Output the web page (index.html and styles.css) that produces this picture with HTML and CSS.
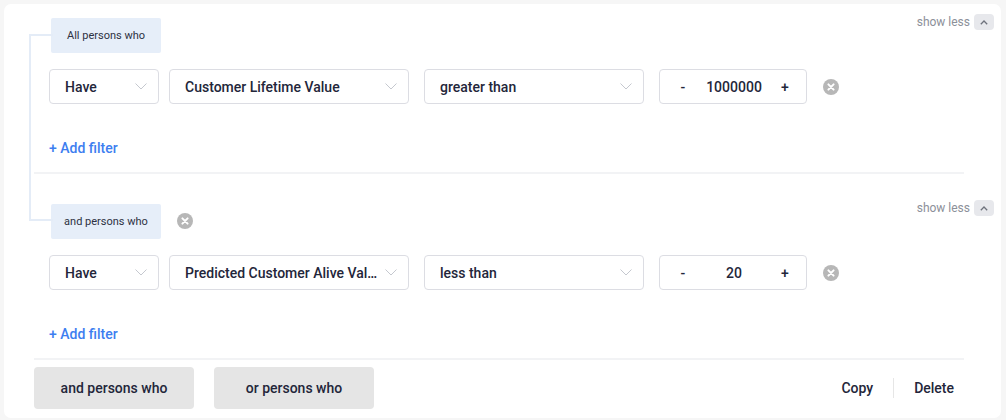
FILE: index.html
```html
<!DOCTYPE html>
<html lang="en">
<head>
  <meta charset="UTF-8" />
  <meta name="viewport" content="width=device-width, initial-scale=1" />
  <title>Segment builder</title>
  <link rel="stylesheet" href="styles.css">
</head>
<body>
  <div class="card">
    <div class="tree"></div>

    <div class="group first">
      <div class="group-head">
        <div class="label">All persons who</div>
        <div class="show-less">show less <span class="caret"><svg width="8" height="5" viewBox="0 0 8 5"><polyline points="0.8,4.2 4,1 7.2,4.2" fill="none" stroke="#6e727c" stroke-width="1.3"/></svg></span></div>
      </div>
      <div class="filter-row">
        <div class="select w-have"><span class="value">Have</span><svg class="chev" width="12" height="7" viewBox="0 0 12 7"><polyline points="0.5,0.5 6,6 11.5,0.5" fill="none" stroke="#c5c8cf" stroke-width="1"/></svg></div>
        <div class="select w-field"><span class="value">Customer Lifetime Value</span><svg class="chev" width="12" height="7" viewBox="0 0 12 7"><polyline points="0.5,0.5 6,6 11.5,0.5" fill="none" stroke="#c5c8cf" stroke-width="1"/></svg></div>
        <div class="select w-op"><span class="value">greater than</span><svg class="chev" width="12" height="7" viewBox="0 0 12 7"><polyline points="0.5,0.5 6,6 11.5,0.5" fill="none" stroke="#c5c8cf" stroke-width="1"/></svg></div>
        <div class="number"><span class="step">-</span><span class="num">1000000</span><span class="step">+</span></div>
        <span class="remove"><svg width="16" height="16" viewBox="0 0 16 16"><circle cx="8" cy="8" r="8" fill="#b7b7b7"/><path d="M5.4 5.4 L10.6 10.6 M10.6 5.4 L5.4 10.6" stroke="#fff" stroke-width="2" stroke-linecap="round"/></svg></span>
      </div>
      <a class="add-filter" href="#">+ Add filter</a>
    </div>

    <div class="divider"></div>

    <div class="group">
      <div class="group-head">
        <div class="label">and persons who</div>
        <span class="remove head-remove"><svg width="16" height="16" viewBox="0 0 16 16"><circle cx="8" cy="8" r="8" fill="#b7b7b7"/><path d="M5.4 5.4 L10.6 10.6 M10.6 5.4 L5.4 10.6" stroke="#fff" stroke-width="2" stroke-linecap="round"/></svg></span>
        <div class="show-less">show less <span class="caret"><svg width="8" height="5" viewBox="0 0 8 5"><polyline points="0.8,4.2 4,1 7.2,4.2" fill="none" stroke="#6e727c" stroke-width="1.3"/></svg></span></div>
      </div>
      <div class="filter-row">
        <div class="select w-have"><span class="value">Have</span><svg class="chev" width="12" height="7" viewBox="0 0 12 7"><polyline points="0.5,0.5 6,6 11.5,0.5" fill="none" stroke="#c5c8cf" stroke-width="1"/></svg></div>
        <div class="select w-field"><span class="value">Predicted Customer Alive Value</span><svg class="chev" width="12" height="7" viewBox="0 0 12 7"><polyline points="0.5,0.5 6,6 11.5,0.5" fill="none" stroke="#c5c8cf" stroke-width="1"/></svg></div>
        <div class="select w-op"><span class="value">less than</span><svg class="chev" width="12" height="7" viewBox="0 0 12 7"><polyline points="0.5,0.5 6,6 11.5,0.5" fill="none" stroke="#c5c8cf" stroke-width="1"/></svg></div>
        <div class="number"><span class="step">-</span><span class="num">20</span><span class="step">+</span></div>
        <span class="remove"><svg width="16" height="16" viewBox="0 0 16 16"><circle cx="8" cy="8" r="8" fill="#b7b7b7"/><path d="M5.4 5.4 L10.6 10.6 M10.6 5.4 L5.4 10.6" stroke="#fff" stroke-width="2" stroke-linecap="round"/></svg></span>
      </div>
      <a class="add-filter" href="#">+ Add filter</a>
    </div>

    <div class="divider"></div>

    <div class="footer">
      <button class="group-btn">and persons who</button>
      <button class="group-btn">or persons who</button>
      <div class="actions">
        <button class="link-btn">Copy</button>
        <span class="sep"></span>
        <button class="link-btn">Delete</button>
      </div>
    </div>
  </div>
</body>
</html>
```

FILE: styles.css
```css
body {
  margin: 0;
  background: #f6f6f6;
  font-family: Roboto, "Noto Sans", Arial, sans-serif;
  color: #23263a;
}
.card {
  position: relative;
  margin: 4px 5px 2px 4px;
  height: 414px;
  box-sizing: border-box;
  background: #fff;
  border-radius: 7px;
  padding: 0 7px 9px 0;
}
.tree {
  position: absolute;
  left: 25px;
  top: 30px;
  width: 22px;
  height: 183px;
  border: 2px solid #e4ecf7;
  border-right: none;
}
.group {
  padding-top: 30px;
}
.group.first {
  padding-top: 14px;
}
.group-head {
  display: flex;
  align-items: flex-start;
  padding-left: 47px;
}
.label {
  width: 110px;
  height: 35px;
  display: flex;
  align-items: center;
  justify-content: center;
  background: #e6eef9;
  border-radius: 2px;
  font-size: 11px;
  color: #2d3142;
}
.head-remove {
  margin: 9px 0 0 14px;
}
.show-less {
  margin-left: auto;
  margin-top: -4px;
  display: flex;
  align-items: center;
  gap: 4px;
  font-size: 12px;
  color: #8c9099;
}
.caret {
  width: 20px;
  height: 16px;
  display: flex;
  align-items: center;
  justify-content: center;
  background: #e7e8ec;
  border-radius: 4px;
}
.filter-row {
  display: flex;
  align-items: center;
  margin-top: 16px;
  padding-left: 45px;
}
.select {
  height: 35px;
  box-sizing: border-box;
  border: 1px solid #dcdde3;
  border-radius: 4px;
  display: flex;
  align-items: center;
  padding: 0 11px 0 15px;
  font-size: 14px;
  font-weight: 500;
  margin-right: 15px;
}
.select .value {
  flex: 1;
  white-space: nowrap;
  overflow: hidden;
  text-overflow: ellipsis;
  padding-right: 4px;
}
.chev {
  flex: none;
}
.w-have {
  width: 110px;
  margin-right: 10px;
}
.w-field {
  width: 240px;
}
.w-op {
  width: 220px;
}
.number {
  width: 148px;
  height: 35px;
  box-sizing: border-box;
  border: 1px solid #dcdde3;
  border-radius: 4px;
  display: flex;
  align-items: center;
  padding: 0 17px 0 19px;
  font-size: 14px;
  font-weight: 500;
}
.number .num {
  flex: 1;
  text-align: center;
}
.step {
  width: 8px;
  text-align: center;
}
.remove {
  display: inline-flex;
  margin-left: 16px;
}
.add-filter {
  display: inline-block;
  margin: 34px 0 0 45px;
  line-height: 20px;
  font-size: 14px;
  font-weight: 500;
  color: #3d7ef0;
  text-decoration: none;
}
.divider {
  height: 2px;
  background: #f2f3f5;
  margin: 14px 30px 0 30px;
}
.footer {
  display: flex;
  align-items: center;
  margin-top: 7px;
  padding-left: 30px;
}
.group-btn {
  width: 160px;
  height: 42px;
  margin-right: 20px;
  border: none;
  border-radius: 4px;
  background: #e5e5e5;
  font-family: inherit;
  font-size: 14px;
  font-weight: 500;
  color: #23263a;
  cursor: pointer;
}
.actions {
  margin-left: auto;
  margin-right: 40px;
  display: flex;
  align-items: center;
  gap: 20px;
}
.link-btn {
  border: none;
  background: none;
  padding: 0;
  font-family: inherit;
  font-size: 14px;
  font-weight: 500;
  color: #23263a;
  cursor: pointer;
}
.sep {
  width: 1px;
  height: 20px;
  background: #e6e6e6;
}
```
